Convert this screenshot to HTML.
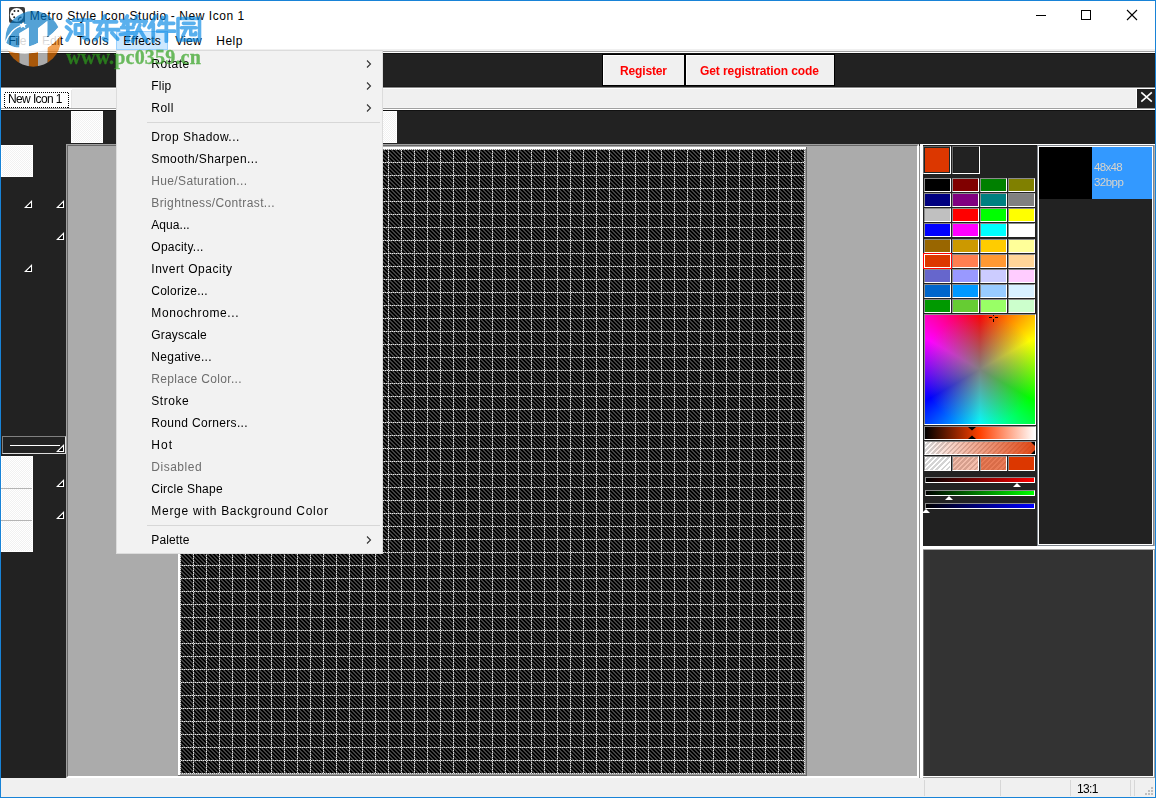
<!DOCTYPE html>
<html><head><meta charset="utf-8"><title>Metro Style Icon Studio</title>
<style>
html,body{margin:0;padding:0;}
body{width:1156px;height:798px;overflow:hidden;background:#222222;position:relative;font-family:"Liberation Sans",sans-serif;}
#r{position:absolute;left:0;top:0;width:1156px;height:798px;overflow:hidden;}
#r div{position:absolute;box-sizing:border-box;}
#r svg{position:absolute;}
.t{position:absolute;white-space:pre;}
</style></head><body><div id="r">
<div style="left:0px;top:0px;width:1156px;height:798px;background:#1883d7;"></div>
<div style="left:1px;top:1px;width:1154px;height:48px;background:#ffffff;"></div>
<div style="left:1px;top:49px;width:1154px;height:2px;background:#f0f0f0;"></div>
<div style="left:1px;top:51px;width:1154px;height:1px;background:#a0a0a0;"></div>
<div style="left:1px;top:52px;width:1154px;height:1px;background:#ffffff;"></div>
<div style="left:1px;top:53px;width:1154px;height:1px;background:#111111;"></div>
<div style="left:1px;top:54px;width:1154px;height:32px;background:#222222;"></div>
<div style="left:1px;top:86px;width:1154px;height:1px;background:#1a1a1a;"></div>
<div style="left:1px;top:87px;width:1154px;height:1px;background:#8a8a8a;"></div>
<div style="left:1px;top:88px;width:1154px;height:1px;background:#ffffff;"></div>
<div style="left:1px;top:89px;width:1154px;height:18px;background:#f0f0f0;"></div>
<div style="left:1px;top:107px;width:1154px;height:1px;background:#f4f4f4;"></div>
<div style="left:1px;top:108px;width:1154px;height:1px;background:#a0a0a0;"></div>
<div style="left:1px;top:109px;width:1154px;height:1px;background:#ffffff;"></div>
<div style="left:1px;top:110px;width:1154px;height:1px;background:#111111;"></div>
<div style="left:1px;top:111px;width:1154px;height:667px;background:#222222;"></div>
<div style="left:66px;top:776px;width:1089px;height:2px;background:#ffffff;"></div>
<div style="left:1px;top:778px;width:65px;height:1px;background:#ffffff;"></div>
<div style="left:1px;top:796px;width:1154px;height:1px;background:#fcf5ee;"></div>
<div style="left:1px;top:778px;width:1px;height:19px;background:#fcf5ee;"></div>
<div style="left:1px;top:778px;width:1154px;height:19px;background:#f0f0f0;"></div>
<svg style="left:9px;top:7px" width="16" height="16" viewBox="0 0 16 16"><rect x="0" y="0" width="16" height="16" rx="2" fill="#3c3c3c"/><circle cx="7.700" cy="7.900" r="6.900" fill="#fff"/><path d="M9.500 13.500C9 11.500 10.500 10 12.500 10.300" fill="none" stroke="#3c3c3c" stroke-width="1.300"/><circle cx="5.500" cy="4" r="1" fill="#222"/><circle cx="9.200" cy="4" r="1" fill="#222"/><circle cx="3.400" cy="7.200" r="1" fill="#222"/><circle cx="5.200" cy="10.300" r="1" fill="#222"/></svg>
<span id="title" class="t" style="left:29.8px;top:10.14px;font-size:12px;line-height:13.79px;color:#000;font-weight:normal;font-family:'Liberation Sans',sans-serif;letter-spacing:0.564px;">Metro Style Icon Studio - New Icon 1</span>
<svg style="left:1030px;top:0" width="125" height="32" viewBox="1030 0 125 32" shape-rendering="crispEdges"><rect x="1036" y="15" width="10" height="1" fill="#000"/><rect x="1081.5" y="10.5" width="9" height="9" fill="none" stroke="#000" stroke-width="1"/><path d="M1127 10L1137 20M1137 10L1127 20" stroke="#000" stroke-width="1.1" shape-rendering="auto"/></svg>
<div style="left:116px;top:31px;width:52px;height:19px;background:#cce8ff;border:1px solid #99d1ff;"></div>
<span id="m_file" class="t" style="left:8.5px;top:34.64px;font-size:12px;line-height:13.79px;color:#000;font-weight:normal;font-family:'Liberation Sans',sans-serif;letter-spacing:-0.448px;">File</span>
<span id="m_edit" class="t" style="left:42px;top:34.64px;font-size:12px;line-height:13.79px;color:#000;font-weight:normal;font-family:'Liberation Sans',sans-serif;letter-spacing:0.104px;">Edit</span>
<span id="m_tools" class="t" style="left:77px;top:34.64px;font-size:12px;line-height:13.79px;color:#000;font-weight:normal;font-family:'Liberation Sans',sans-serif;letter-spacing:0.871px;">Tools</span>
<span id="m_effects" class="t" style="left:123.2px;top:34.64px;font-size:12px;line-height:13.79px;color:#000;font-weight:normal;font-family:'Liberation Sans',sans-serif;letter-spacing:0.189px;">Effects</span>
<span id="m_view" class="t" style="left:175.3px;top:34.64px;font-size:12px;line-height:13.79px;color:#000;font-weight:normal;font-family:'Liberation Sans',sans-serif;letter-spacing:0.168px;">View</span>
<span id="m_help" class="t" style="left:216.2px;top:34.64px;font-size:12px;line-height:13.79px;color:#000;font-weight:normal;font-family:'Liberation Sans',sans-serif;letter-spacing:0.538px;">Help</span>
<div style="left:602px;top:54px;width:233px;height:32px;background:#000000;"></div>
<div style="left:603px;top:55px;width:81px;height:30px;background:#f0f0f0;border-left:1px solid #fff;border-top:1px solid #fff;"></div>
<div style="left:686px;top:55px;width:148px;height:30px;background:#f0f0f0;border-left:1px solid #fff;border-top:1px solid #fff;"></div>
<span id="b_reg" class="t" style="left:620.3px;top:64.64px;font-size:12px;line-height:13.79px;color:#ff0000;font-weight:bold;font-family:'Liberation Sans',sans-serif;letter-spacing:-0.147px;will-change:transform;">Register</span>
<span id="b_get" class="t" style="left:700.3px;top:64.64px;font-size:12px;line-height:13.79px;color:#ff0000;font-weight:bold;font-family:'Liberation Sans',sans-serif;letter-spacing:-0.085px;will-change:transform;">Get registration code</span>
<div style="left:1px;top:89px;width:71px;height:19px;background:#ffffff;"></div>
<div style="left:71px;top:90px;width:1px;height:18px;background:#e4e4e4;"></div>
<svg style="left:4px;top:92px" width="65" height="16" shape-rendering="crispEdges"><rect x="0.5" y="0.5" width="64" height="15" fill="none" stroke="#000" stroke-width="1" stroke-dasharray="1 1"/></svg>
<span id="tab" class="t" style="left:8.4px;top:93.14px;font-size:12px;line-height:13.79px;color:#000;font-weight:normal;font-family:'Liberation Sans',sans-serif;letter-spacing:-0.615px;will-change:transform;">New Icon 1</span>
<div style="left:1136px;top:88px;width:1px;height:20px;background:#ffffff;"></div>
<div style="left:1137px;top:89px;width:18px;height:19px;background:#222222;"></div>
<svg style="left:1137px;top:89px" width="18" height="19" viewBox="1137 89 18 19"><path d="M1141.300 92.300L1151.800 101.700M1151.800 92.300L1141.300 101.700" stroke="#fff" stroke-width="1.6"/></svg>
<div style="left:71px;top:111px;width:32px;height:32px;background:#ffffff;"></div>
<div style="left:72px;top:112px;width:30px;height:30px;background:#fff;background-image:conic-gradient(#fff 25%,#f1f1f1 0 50%,#fff 0 75%,#f1f1f1 0);background-size:2px 2px;"></div>
<div style="left:365px;top:111px;width:32px;height:32px;background:#ffffff;"></div>
<div style="left:366px;top:112px;width:30px;height:30px;background:#fff;background-image:conic-gradient(#fff 25%,#f1f1f1 0 50%,#fff 0 75%,#f1f1f1 0);background-size:2px 2px;"></div>
<div style="left:1px;top:145px;width:32px;height:32px;background:#ffffff;"></div>
<div style="left:2px;top:146px;width:30px;height:30px;background:#fff;background-image:conic-gradient(#fff 25%,#f1f1f1 0 50%,#fff 0 75%,#f1f1f1 0);background-size:2px 2px;"></div>
<svg style="left:56px;top:200px" width="9" height="9" viewBox="0 0 9 9"><path d="M7.500 1.300L7.500 7.500L1.300 7.500Z" fill="#000" stroke="#fff" stroke-width="1.100"/></svg>
<svg style="left:24px;top:200px" width="9" height="9" viewBox="0 0 9 9"><path d="M7.500 1.300L7.500 7.500L1.300 7.500Z" fill="#000" stroke="#fff" stroke-width="1.100"/></svg>
<svg style="left:56px;top:232px" width="9" height="9" viewBox="0 0 9 9"><path d="M7.500 1.300L7.500 7.500L1.300 7.500Z" fill="#000" stroke="#fff" stroke-width="1.100"/></svg>
<svg style="left:24px;top:264px" width="9" height="9" viewBox="0 0 9 9"><path d="M7.500 1.300L7.500 7.500L1.300 7.500Z" fill="#000" stroke="#fff" stroke-width="1.100"/></svg>
<div style="left:2px;top:436px;width:64px;height:18px;background:#222222;border:1px solid;border-color:#808080 #dcdcdc #dcdcdc #808080;"></div>
<div style="left:10px;top:445px;width:50px;height:1px;background:#ffffff;"></div>
<svg style="left:56px;top:444px" width="9" height="9" viewBox="0 0 9 9"><path d="M7.500 1.300L7.500 7.500L1.300 7.500Z" fill="#000" stroke="#fff" stroke-width="1.100"/></svg>
<div style="left:1px;top:456px;width:32px;height:96px;background:#ffffff;"></div>
<div style="left:2px;top:457px;width:30px;height:94px;background:#fff;background-image:conic-gradient(#fff 25%,#f1f1f1 0 50%,#fff 0 75%,#f1f1f1 0);background-size:2px 2px;"></div>
<div style="left:1px;top:488px;width:31px;height:1px;background:#b4b4b4;"></div>
<div style="left:1px;top:520px;width:31px;height:1px;background:#b4b4b4;"></div>
<svg style="left:56px;top:479px" width="9" height="9" viewBox="0 0 9 9"><path d="M7.500 1.300L7.500 7.500L1.300 7.500Z" fill="#000" stroke="#fff" stroke-width="1.100"/></svg>
<svg style="left:56px;top:511px" width="9" height="9" viewBox="0 0 9 9"><path d="M7.500 1.300L7.500 7.500L1.300 7.500Z" fill="#000" stroke="#fff" stroke-width="1.100"/></svg>
<div style="left:66px;top:144px;width:853px;height:634px;background:#ababab;border-top:1px solid #a0a0a0;border-left:1px solid #a0a0a0;border-right:1px solid #fff;border-bottom:1px solid #fff;"></div>
<div style="left:67px;top:145px;width:851px;height:632px;background:#ababab;border-top:1px solid #696969;border-left:1px solid #696969;border-right:1px solid #fff;border-bottom:1px solid #fff;"></div>
<div style="left:178px;top:147px;width:629px;height:629px;background:#ffffff;"></div>
<div style="left:805px;top:149px;width:1px;height:626px;background:#999999;"></div>
<div style="left:806px;top:147px;width:1px;height:629px;background:#696969;"></div>
<div style="left:180px;top:774px;width:626px;height:1px;background:#999999;"></div>
<div style="left:178px;top:775px;width:629px;height:1px;background:#696969;"></div>
<svg style="left:0;top:0" width="1156" height="798" shape-rendering="crispEdges"><defs>
<pattern id="h" width="4" height="4" patternUnits="userSpaceOnUse"><rect width="4" height="4" fill="#414141"/><path d="M0 0h1v1h-1zM3 0h1v1h-1zM0 1h2v1h-2zM1 2h2v1h-2zM2 3h2v1h-2z" fill="#000"/></pattern>
<pattern id="gv" width="26" height="2" patternUnits="userSpaceOnUse"><rect x="24" y="1" width="1" height="1" fill="#e2e2e2"/><rect x="11" y="0" width="1" height="1" fill="#e2e2e2"/><rect x="24" y="0" width="1" height="1" fill="#787878"/><rect x="11" y="1" width="1" height="1" fill="#787878"/></pattern>
<pattern id="gh" width="2" height="26" patternUnits="userSpaceOnUse"><rect x="0" y="19" width="1" height="1" fill="#e2e2e2"/><rect x="1" y="6" width="1" height="1" fill="#e2e2e2"/><rect x="1" y="19" width="1" height="1" fill="#787878"/><rect x="0" y="6" width="1" height="1" fill="#787878"/></pattern>
</defs><rect x="180" y="149" width="625" height="625" fill="url(#h)"/><rect x="180" y="149" width="625" height="625" fill="url(#gv)"/><rect x="180" y="149" width="625" height="625" fill="url(#gh)"/></svg>
<div style="left:919px;top:146px;width:1px;height:632px;background:#8c8c8c;"></div>
<div style="left:920px;top:144px;width:3px;height:634px;background:#ffffff;"></div>
<div style="left:920px;top:144px;width:235px;height:1px;background:#ffffff;"></div>
<div style="left:923px;top:145px;width:232px;height:401px;background:#222222;"></div>
<div style="left:923px;top:145px;width:114px;height:1px;background:#1a1a1a;"></div>
<div style="left:923px;top:146px;width:28px;height:28px;background:#dc3700;border:1px solid;border-color:#6a6a6a #fff #fff #6a6a6a;"></div>
<div style="left:924px;top:147px;width:26px;height:26px;background:#dc3700;border:1px solid #1e2626;"></div>
<div style="left:952px;top:146px;width:28px;height:28px;background:#222222;border:1px solid;border-color:#6a6a6a #fff #fff #6a6a6a;"></div>
<div style="left:953px;top:147px;width:26px;height:26px;background:#222222;border:1px solid #1a1a1a;"></div>
<div style="left:924px;top:178px;width:27px;height:14px;background:#000000;border:1px solid;border-color:#8c8c8c #fff #fff #8c8c8c;"></div>
<div style="left:952px;top:178px;width:27px;height:14px;background:#800000;border:1px solid;border-color:#8c8c8c #fff #fff #8c8c8c;"></div>
<div style="left:980px;top:178px;width:27px;height:14px;background:#008000;border:1px solid;border-color:#8c8c8c #fff #fff #8c8c8c;"></div>
<div style="left:1008px;top:178px;width:27px;height:14px;background:#808000;border:1px solid;border-color:#8c8c8c #fff #fff #8c8c8c;"></div>
<div style="left:924px;top:193px;width:27px;height:14px;background:#000080;border:1px solid;border-color:#8c8c8c #fff #fff #8c8c8c;"></div>
<div style="left:952px;top:193px;width:27px;height:14px;background:#800080;border:1px solid;border-color:#8c8c8c #fff #fff #8c8c8c;"></div>
<div style="left:980px;top:193px;width:27px;height:14px;background:#008080;border:1px solid;border-color:#8c8c8c #fff #fff #8c8c8c;"></div>
<div style="left:1008px;top:193px;width:27px;height:14px;background:#808080;border:1px solid;border-color:#8c8c8c #fff #fff #8c8c8c;"></div>
<div style="left:924px;top:208px;width:27px;height:14px;background:#c0c0c0;border:1px solid;border-color:#8c8c8c #fff #fff #8c8c8c;"></div>
<div style="left:952px;top:208px;width:27px;height:14px;background:#ff0000;border:1px solid;border-color:#8c8c8c #fff #fff #8c8c8c;"></div>
<div style="left:980px;top:208px;width:27px;height:14px;background:#00ff00;border:1px solid;border-color:#8c8c8c #fff #fff #8c8c8c;"></div>
<div style="left:1008px;top:208px;width:27px;height:14px;background:#ffff00;border:1px solid;border-color:#8c8c8c #fff #fff #8c8c8c;"></div>
<div style="left:924px;top:223px;width:27px;height:14px;background:#0000ff;border:1px solid;border-color:#8c8c8c #fff #fff #8c8c8c;"></div>
<div style="left:952px;top:223px;width:27px;height:14px;background:#ff00ff;border:1px solid;border-color:#8c8c8c #fff #fff #8c8c8c;"></div>
<div style="left:980px;top:223px;width:27px;height:14px;background:#00ffff;border:1px solid;border-color:#8c8c8c #fff #fff #8c8c8c;"></div>
<div style="left:1008px;top:223px;width:27px;height:14px;background:#ffffff;border:1px solid;border-color:#8c8c8c #fff #fff #8c8c8c;"></div>
<div style="left:924px;top:239px;width:27px;height:14px;background:#996600;border:1px solid;border-color:#8c8c8c #fff #fff #8c8c8c;"></div>
<div style="left:952px;top:239px;width:27px;height:14px;background:#cc9900;border:1px solid;border-color:#8c8c8c #fff #fff #8c8c8c;"></div>
<div style="left:980px;top:239px;width:27px;height:14px;background:#ffcc00;border:1px solid;border-color:#8c8c8c #fff #fff #8c8c8c;"></div>
<div style="left:1008px;top:239px;width:27px;height:14px;background:#ffff99;border:1px solid;border-color:#8c8c8c #fff #fff #8c8c8c;"></div>
<div style="left:923px;top:253px;width:29px;height:16px;background:#ffffff;border:1px solid #ff0000;"></div>
<div style="left:925px;top:255px;width:25px;height:12px;background:#dc3700;"></div>
<div style="left:952px;top:254px;width:27px;height:14px;background:#ff7f50;border:1px solid;border-color:#8c8c8c #fff #fff #8c8c8c;"></div>
<div style="left:980px;top:254px;width:27px;height:14px;background:#ff9933;border:1px solid;border-color:#8c8c8c #fff #fff #8c8c8c;"></div>
<div style="left:1008px;top:254px;width:27px;height:14px;background:#ffd699;border:1px solid;border-color:#8c8c8c #fff #fff #8c8c8c;"></div>
<div style="left:924px;top:269px;width:27px;height:14px;background:#6666cc;border:1px solid;border-color:#8c8c8c #fff #fff #8c8c8c;"></div>
<div style="left:952px;top:269px;width:27px;height:14px;background:#9999ff;border:1px solid;border-color:#8c8c8c #fff #fff #8c8c8c;"></div>
<div style="left:980px;top:269px;width:27px;height:14px;background:#ccccff;border:1px solid;border-color:#8c8c8c #fff #fff #8c8c8c;"></div>
<div style="left:1008px;top:269px;width:27px;height:14px;background:#ffccff;border:1px solid;border-color:#8c8c8c #fff #fff #8c8c8c;"></div>
<div style="left:924px;top:284px;width:27px;height:14px;background:#0066cc;border:1px solid;border-color:#8c8c8c #fff #fff #8c8c8c;"></div>
<div style="left:952px;top:284px;width:27px;height:14px;background:#0099ff;border:1px solid;border-color:#8c8c8c #fff #fff #8c8c8c;"></div>
<div style="left:980px;top:284px;width:27px;height:14px;background:#99ccff;border:1px solid;border-color:#8c8c8c #fff #fff #8c8c8c;"></div>
<div style="left:1008px;top:284px;width:27px;height:14px;background:#d9f0ff;border:1px solid;border-color:#8c8c8c #fff #fff #8c8c8c;"></div>
<div style="left:924px;top:299px;width:27px;height:14px;background:#009900;border:1px solid;border-color:#8c8c8c #fff #fff #8c8c8c;"></div>
<div style="left:952px;top:299px;width:27px;height:14px;background:#66cc33;border:1px solid;border-color:#8c8c8c #fff #fff #8c8c8c;"></div>
<div style="left:980px;top:299px;width:27px;height:14px;background:#99ff66;border:1px solid;border-color:#8c8c8c #fff #fff #8c8c8c;"></div>
<div style="left:1008px;top:299px;width:27px;height:14px;background:#ccffcc;border:1px solid;border-color:#8c8c8c #fff #fff #8c8c8c;"></div>
<div style="left:924px;top:314px;width:112px;height:111px;background:#222;border:1px solid;border-color:#8c8c8c #fff #fff #8c8c8c;"></div>
<div style="left:925px;top:315px;width:110px;height:109px;background:transparent;background:radial-gradient(circle 57px at 50% 50%,rgba(128,128,128,1) 0%,rgba(128,128,128,0) 100%),conic-gradient(from 0deg at 50% 50%,#ff0000,#ffff00,#00ff00,#00ffff,#0000ff,#ff00ff,#ff0000);"></div>
<div style="left:989px;top:317px;width:3px;height:1px;background:#000;"></div>
<div style="left:995px;top:317px;width:3px;height:1px;background:#000;"></div>
<div style="left:993px;top:315px;width:1px;height:1px;background:#000;"></div>
<div style="left:993px;top:319px;width:1px;height:3px;background:#000;"></div>
<div style="left:924px;top:426px;width:112px;height:14px;background:#222;border:1px solid;border-color:#8c8c8c #fff #fff #8c8c8c;"></div>
<div style="left:925px;top:427px;width:110px;height:12px;background:transparent;background:linear-gradient(to right,#000 0%,#ff4000 50%,#fff 100%);"></div>
<svg style="left:966px;top:427px" width="12" height="12" viewBox="0 0 12 12"><path d="M2 0L10 0L6 3.600Z" fill="#000"/><path d="M2 12L10 12L6 8.400Z" fill="#000"/></svg>
<div style="left:924px;top:441px;width:112px;height:14px;background:#222;border:1px solid;border-color:#8c8c8c #fff #fff #8c8c8c;"></div>
<div style="left:925px;top:442px;width:110px;height:12px;background:transparent;background:linear-gradient(to right,rgba(220,55,0,0) 0%,rgba(220,55,0,0.92) 100%),repeating-linear-gradient(135deg,#ffffff 0px,#ffffff 2.100px,#d4d4d4 2.100px,#d4d4d4 3.540px);"></div>
<svg style="left:1029px;top:442px" width="6" height="12" viewBox="0 0 6 12"><path d="M2 0L6 0L6 4Z" fill="#000"/><path d="M2 12L6 12L6 8Z" fill="#000"/></svg>
<div style="left:924px;top:456px;width:27px;height:15px;background:#222;border:1px solid;border-color:#8c8c8c #fff #fff #8c8c8c;"></div>
<div style="left:925px;top:457px;width:25px;height:13px;background:transparent;background:linear-gradient(rgba(220,55,0,0),rgba(220,55,0,0)),repeating-linear-gradient(135deg,#ffffff 0px,#ffffff 2.100px,#d4d4d4 2.100px,#d4d4d4 3.540px);"></div>
<div style="left:952px;top:456px;width:27px;height:15px;background:#222;border:1px solid;border-color:#8c8c8c #fff #fff #8c8c8c;"></div>
<div style="left:953px;top:457px;width:25px;height:13px;background:transparent;background:linear-gradient(rgba(220,55,0,0.33),rgba(220,55,0,0.33)),repeating-linear-gradient(135deg,#ffffff 0px,#ffffff 2.100px,#d4d4d4 2.100px,#d4d4d4 3.540px);"></div>
<div style="left:980px;top:456px;width:27px;height:15px;background:#222;border:1px solid;border-color:#8c8c8c #fff #fff #8c8c8c;"></div>
<div style="left:981px;top:457px;width:25px;height:13px;background:transparent;background:linear-gradient(rgba(220,55,0,0.66),rgba(220,55,0,0.66)),repeating-linear-gradient(135deg,#ffffff 0px,#ffffff 2.100px,#d4d4d4 2.100px,#d4d4d4 3.540px);"></div>
<div style="left:1008px;top:456px;width:27px;height:15px;background:#222;border:1px solid;border-color:#8c8c8c #fff #fff #8c8c8c;"></div>
<div style="left:1009px;top:457px;width:25px;height:13px;background:transparent;background:linear-gradient(rgba(220,55,0,1),rgba(220,55,0,1)),repeating-linear-gradient(135deg,#ffffff 0px,#ffffff 2.100px,#d4d4d4 2.100px,#d4d4d4 3.540px);"></div>
<div style="left:925px;top:477px;width:110px;height:6px;background:#222;border:1px solid;border-color:#8c8c8c #fff #fff #8c8c8c;"></div>
<div style="left:926px;top:478px;width:108px;height:4px;background:transparent;background:linear-gradient(to right,#000,#ff0000);"></div>
<svg style="left:1012.5px;top:482.5px" width="8" height="4" viewBox="0 0 8 4"><path d="M0 4L8 4L4 0Z" fill="#fff"/></svg>
<div style="left:925px;top:490px;width:110px;height:6px;background:#222;border:1px solid;border-color:#8c8c8c #fff #fff #8c8c8c;"></div>
<div style="left:926px;top:491px;width:108px;height:4px;background:transparent;background:linear-gradient(to right,#000,#00ff00);"></div>
<svg style="left:944.5px;top:495.5px" width="8" height="4" viewBox="0 0 8 4"><path d="M0 4L8 4L4 0Z" fill="#fff"/></svg>
<div style="left:925px;top:503px;width:110px;height:6px;background:#222;border:1px solid;border-color:#8c8c8c #fff #fff #8c8c8c;"></div>
<div style="left:926px;top:504px;width:108px;height:4px;background:transparent;background:linear-gradient(to right,#000,#0000ff);"></div>
<svg style="left:922.3px;top:508.5px" width="8" height="4" viewBox="0 0 8 4"><path d="M0 4L8 4L4 0Z" fill="#fff"/></svg>
<div style="left:1037px;top:145px;width:117px;height:401px;background:#222222;border:1px solid #80868e;"></div>
<div style="left:1038px;top:146px;width:115px;height:399px;background:#222222;border:1px solid #ffffff;"></div>
<div style="left:1154px;top:145px;width:1px;height:401px;background:#b0aca8;"></div>
<div style="left:1039px;top:147px;width:53px;height:52px;background:#000000;"></div>
<div style="left:1092px;top:147px;width:60px;height:52px;background:#3399ff;"></div>
<span id="f1" class="t" style="left:1093.5px;top:160.59px;font-size:11.5px;line-height:13.21px;color:#d8d4cc;font-weight:normal;font-family:'Liberation Sans',sans-serif;letter-spacing:-0.686px;will-change:transform;">48x48</span>
<span id="f2" class="t" style="left:1093.5px;top:175.89px;font-size:11.5px;line-height:13.21px;color:#d8d4cc;font-weight:normal;font-family:'Liberation Sans',sans-serif;letter-spacing:-0.546px;will-change:transform;">32bpp</span>
<div style="left:920px;top:546px;width:235px;height:3px;background:#ffffff;"></div>
<div style="left:923px;top:549px;width:232px;height:1px;background:#a8a8a8;"></div>
<div style="left:923px;top:550px;width:230px;height:226px;background:#333333;"></div>
<div style="left:923px;top:550px;width:1px;height:226px;background:#707070;"></div>
<div style="left:1153px;top:550px;width:1px;height:227px;background:#ffffff;"></div>
<div style="left:1154px;top:550px;width:1px;height:227px;background:#a0a0a0;"></div>
<div style="left:923px;top:776px;width:231px;height:1px;background:#ffffff;"></div>
<div style="left:923px;top:777px;width:232px;height:1px;background:#a0a0a0;"></div>
<div style="left:1154px;top:778px;width:1px;height:19px;background:#fcf5ee;"></div>
<div style="left:924px;top:780px;width:1px;height:16px;background:#d7d7d7;"></div>
<div style="left:1000px;top:780px;width:1px;height:16px;background:#d7d7d7;"></div>
<div style="left:1070px;top:780px;width:1px;height:16px;background:#d7d7d7;"></div>
<div style="left:1130px;top:780px;width:1px;height:16px;background:#d7d7d7;"></div>
<div style="left:1134px;top:780px;width:1px;height:16px;background:#d7d7d7;"></div>
<span id="st" class="t" style="left:1077.3px;top:783.14px;font-size:12px;line-height:13.79px;color:#000;font-weight:normal;font-family:'Liberation Sans',sans-serif;letter-spacing:-0.62px;will-change:transform;">13:1</span>
<div style="left:1151px;top:787px;width:2px;height:2px;background:#bfbfbf;"></div>
<div style="left:1148px;top:790px;width:2px;height:2px;background:#bfbfbf;"></div>
<div style="left:1151px;top:790px;width:2px;height:2px;background:#bfbfbf;"></div>
<div style="left:1145px;top:793px;width:2px;height:2px;background:#bfbfbf;"></div>
<div style="left:1148px;top:793px;width:2px;height:2px;background:#bfbfbf;"></div>
<div style="left:1151px;top:793px;width:2px;height:2px;background:#bfbfbf;"></div>
<div style="left:116px;top:50px;width:267px;height:504px;background:#f2f2f2;border:1px solid #dcdcdc;"></div>
<span id="mi0" class="t" style="left:151.3px;top:57.64px;font-size:12px;line-height:13.79px;color:#000;font-weight:normal;font-family:'Liberation Sans',sans-serif;letter-spacing:0.528px;">Rotate</span>
<svg style="left:365px;top:58.5px" width="8" height="10" viewBox="0 0 8 10"><path d="M2 1.500L5.500 5L2 8.500" fill="none" stroke="#333" stroke-width="1.100"/></svg>
<span id="mi1" class="t" style="left:151.3px;top:79.64px;font-size:12px;line-height:13.79px;color:#000;font-weight:normal;font-family:'Liberation Sans',sans-serif;letter-spacing:0.219px;">Flip</span>
<svg style="left:365px;top:80.5px" width="8" height="10" viewBox="0 0 8 10"><path d="M2 1.500L5.500 5L2 8.500" fill="none" stroke="#333" stroke-width="1.100"/></svg>
<span id="mi2" class="t" style="left:151.3px;top:101.64px;font-size:12px;line-height:13.79px;color:#000;font-weight:normal;font-family:'Liberation Sans',sans-serif;letter-spacing:0.443px;">Roll</span>
<svg style="left:365px;top:102.5px" width="8" height="10" viewBox="0 0 8 10"><path d="M2 1.500L5.500 5L2 8.500" fill="none" stroke="#333" stroke-width="1.100"/></svg>
<span id="mi3" class="t" style="left:151.3px;top:130.64px;font-size:12px;line-height:13.79px;color:#000;font-weight:normal;font-family:'Liberation Sans',sans-serif;letter-spacing:0.457px;">Drop Shadow...</span>
<span id="mi4" class="t" style="left:151.3px;top:152.64px;font-size:12px;line-height:13.79px;color:#000;font-weight:normal;font-family:'Liberation Sans',sans-serif;letter-spacing:0.402px;">Smooth/Sharpen...</span>
<span id="mi5" class="t" style="left:151.3px;top:174.64px;font-size:12px;line-height:13.79px;color:#6d6d6d;font-weight:normal;font-family:'Liberation Sans',sans-serif;letter-spacing:0.352px;">Hue/Saturation...</span>
<span id="mi6" class="t" style="left:151.3px;top:196.64px;font-size:12px;line-height:13.79px;color:#6d6d6d;font-weight:normal;font-family:'Liberation Sans',sans-serif;letter-spacing:0.377px;">Brightness/Contrast...</span>
<span id="mi7" class="t" style="left:151.3px;top:218.64px;font-size:12px;line-height:13.79px;color:#000;font-weight:normal;font-family:'Liberation Sans',sans-serif;letter-spacing:0.045px;">Aqua...</span>
<span id="mi8" class="t" style="left:151.3px;top:240.64px;font-size:12px;line-height:13.79px;color:#000;font-weight:normal;font-family:'Liberation Sans',sans-serif;letter-spacing:0.245px;">Opacity...</span>
<span id="mi9" class="t" style="left:151.3px;top:262.64px;font-size:12px;line-height:13.79px;color:#000;font-weight:normal;font-family:'Liberation Sans',sans-serif;letter-spacing:0.513px;">Invert Opacity</span>
<span id="mi10" class="t" style="left:151.3px;top:284.64px;font-size:12px;line-height:13.79px;color:#000;font-weight:normal;font-family:'Liberation Sans',sans-serif;letter-spacing:0.237px;">Colorize...</span>
<span id="mi11" class="t" style="left:151.3px;top:306.64px;font-size:12px;line-height:13.79px;color:#000;font-weight:normal;font-family:'Liberation Sans',sans-serif;letter-spacing:0.596px;">Monochrome...</span>
<span id="mi12" class="t" style="left:151.3px;top:328.64px;font-size:12px;line-height:13.79px;color:#000;font-weight:normal;font-family:'Liberation Sans',sans-serif;letter-spacing:0.171px;">Grayscale</span>
<span id="mi13" class="t" style="left:151.3px;top:350.64px;font-size:12px;line-height:13.79px;color:#000;font-weight:normal;font-family:'Liberation Sans',sans-serif;letter-spacing:0.283px;">Negative...</span>
<span id="mi14" class="t" style="left:151.3px;top:372.64px;font-size:12px;line-height:13.79px;color:#6d6d6d;font-weight:normal;font-family:'Liberation Sans',sans-serif;letter-spacing:0.327px;">Replace Color...</span>
<span id="mi15" class="t" style="left:151.3px;top:394.64px;font-size:12px;line-height:13.79px;color:#000;font-weight:normal;font-family:'Liberation Sans',sans-serif;letter-spacing:0.522px;">Stroke</span>
<span id="mi16" class="t" style="left:151.3px;top:416.64px;font-size:12px;line-height:13.79px;color:#000;font-weight:normal;font-family:'Liberation Sans',sans-serif;letter-spacing:0.327px;">Round Corners...</span>
<span id="mi17" class="t" style="left:151.3px;top:438.64px;font-size:12px;line-height:13.79px;color:#000;font-weight:normal;font-family:'Liberation Sans',sans-serif;letter-spacing:1.056px;">Hot</span>
<span id="mi18" class="t" style="left:151.3px;top:460.64px;font-size:12px;line-height:13.79px;color:#6d6d6d;font-weight:normal;font-family:'Liberation Sans',sans-serif;letter-spacing:0.514px;">Disabled</span>
<span id="mi19" class="t" style="left:151.3px;top:482.64px;font-size:12px;line-height:13.79px;color:#000;font-weight:normal;font-family:'Liberation Sans',sans-serif;letter-spacing:0.236px;">Circle Shape</span>
<span id="mi20" class="t" style="left:151.3px;top:504.64px;font-size:12px;line-height:13.79px;color:#000;font-weight:normal;font-family:'Liberation Sans',sans-serif;letter-spacing:0.712px;">Merge with Background Color</span>
<span id="mi21" class="t" style="left:151.3px;top:533.64px;font-size:12px;line-height:13.79px;color:#000;font-weight:normal;font-family:'Liberation Sans',sans-serif;letter-spacing:0.14px;">Palette</span>
<svg style="left:365px;top:534.5px" width="8" height="10" viewBox="0 0 8 10"><path d="M2 1.500L5.500 5L2 8.500" fill="none" stroke="#333" stroke-width="1.100"/></svg>
<div style="left:147px;top:122px;width:233px;height:1px;background:#d7d7d7;"></div>
<div style="left:147px;top:525px;width:233px;height:1px;background:#d7d7d7;"></div>
<svg style="left:0;top:0" width="260" height="80" viewBox="0 0 260 80"><defs><clipPath id="lc"><circle cx="33.200" cy="38.900" r="27.800"/></clipPath><mask id="gapm" maskUnits="userSpaceOnUse" x="0" y="0" width="70" height="70"><circle cx="33.200" cy="38.900" r="27.800" fill="#fff"/><path d="M0 0L70 0L70 27L58.500 27C48 40 22 56 5.400 42.400L0 42.400Z" fill="#000"/><path d="M62 33C54 48 32 60 6 50L0 50L0 70L70 70L70 33Z" fill="#000"/></mask><mask id="bluem" maskUnits="userSpaceOnUse" x="0" y="0" width="70" height="70"><rect width="70" height="70" fill="#fff"/><path d="M19.400 33.300L28.900 27.500L28.900 49L19.400 49Z" fill="#000"/><path d="M38 28.300L47.300 20.900L47.300 42L38 46Z" fill="#000"/><path d="M23.100 21.600L24.200 23.900L26.600 24.100L24.800 25.700L25.400 28.100L23.100 26.800L20.800 28.100L21.400 25.700L19.600 24.100L22 23.900Z" fill="#000"/><path d="M5 44C8 34 15 27 22 25.500" fill="none" stroke="#000" stroke-width="1.200"/></mask><mask id="orm" maskUnits="userSpaceOnUse" x="0" y="0" width="70" height="70"><rect width="70" height="70" fill="#fff"/><rect x="19.400" y="40" width="9.500" height="30" fill="#000"/><rect x="38" y="40" width="9.500" height="30" fill="#000"/></mask></defs><g opacity="0.67"><g clip-path="url(#lc)"><path d="M0 0L70 0L70 27L58.500 27C48 40 22 56 5.400 42.400L0 42.400Z" fill="#0075c2" mask="url(#bluem)"/><path d="M62 33C54 48 32 60 6 50L0 50L0 70L70 70L70 33Z" fill="#ea7300" mask="url(#orm)"/></g></g><g opacity="0.84" clip-path="url(#lc)"><rect width="70" height="70" fill="#fff" mask="url(#gapm)"/><g><path d="M19.400 33.300L28.900 27.500L28.900 49L19.400 49Z" fill="#fff"/><path d="M38 28.300L47.300 20.900L47.300 42L38 46Z" fill="#fff"/><path d="M23.100 21.600L24.200 23.900L26.600 24.100L24.800 25.700L25.400 28.100L23.100 26.800L20.800 28.100L21.400 25.700L19.600 24.100L22 23.900Z" fill="#fff"/><path d="M5 44C8 34 15 27 22 25.500" fill="none" stroke="#fff" stroke-width="1.200"/></g></g><g opacity="0.62" clip-path="url(#lc)"><g><path d="M19.400 49L28.900 49L28.900 70L19.400 70Z" fill="#fff"/><path d="M38 46L47.500 42L47.500 70L38 70Z" fill="#fff"/></g></g><g opacity="0.67"><g transform="translate(65.5,15.5) scale(0.262)"><path d="M8,20 L20,30 M4,44 L16,54 M6,94 L22,62 M30,18 L98,18 M38,36 H64 V70 H38 Z M84,18 V92 L70,84" fill="none" stroke="#0a89e5" stroke-width="14.5" stroke-linecap="round" stroke-linejoin="round"/></g><g transform="translate(93,15.5) scale(0.262)"><path d="M4,24 L90,24 M46,2 L18,54 M18,54 L98,54 M52,32 V96 L40,88 M28,66 L8,92 M72,66 L94,90" fill="none" stroke="#0a89e5" stroke-width="14.5" stroke-linecap="round" stroke-linejoin="round"/></g><g transform="translate(120.5,15.5) scale(0.262)"><path d="M4,20 L46,20 M26,2 L8,46 M4,46 L48,46 M28,30 V98 M0,72 L50,66 M64,2 L50,36 M58,22 L98,22 L90,38 M74,36 L46,98 M72,52 L100,98" fill="none" stroke="#0a89e5" stroke-width="14.5" stroke-linecap="round" stroke-linejoin="round"/></g><g transform="translate(148,15.5) scale(0.262)"><path d="M30,2 L4,46 M20,32 V98 M56,8 L42,36 M44,30 L98,30 M36,60 L102,60 M70,2 V98" fill="none" stroke="#0a89e5" stroke-width="14.5" stroke-linecap="round" stroke-linejoin="round"/></g><g transform="translate(176.5,16.5) scale(0.245)"><path d="M6,8 H94 V96 H6 Z M28,28 L72,28 M20,46 L80,46 M42,46 L26,80 M58,46 V74 L78,74 L78,66" fill="none" stroke="#0a89e5" stroke-width="14.5" stroke-linecap="round" stroke-linejoin="round"/></g></g></svg>
<span id="wmurl" class="t" style="left:66.3px;top:45.8px;font-size:20px;line-height:22.98px;color:#2ea11c;font-weight:bold;font-family:'Liberation Serif',sans-serif;letter-spacing:0.189px;opacity:0.69;-webkit-text-stroke:0.35px #2ea11c;">www.pc0359.cn</span>
</div></body></html>
